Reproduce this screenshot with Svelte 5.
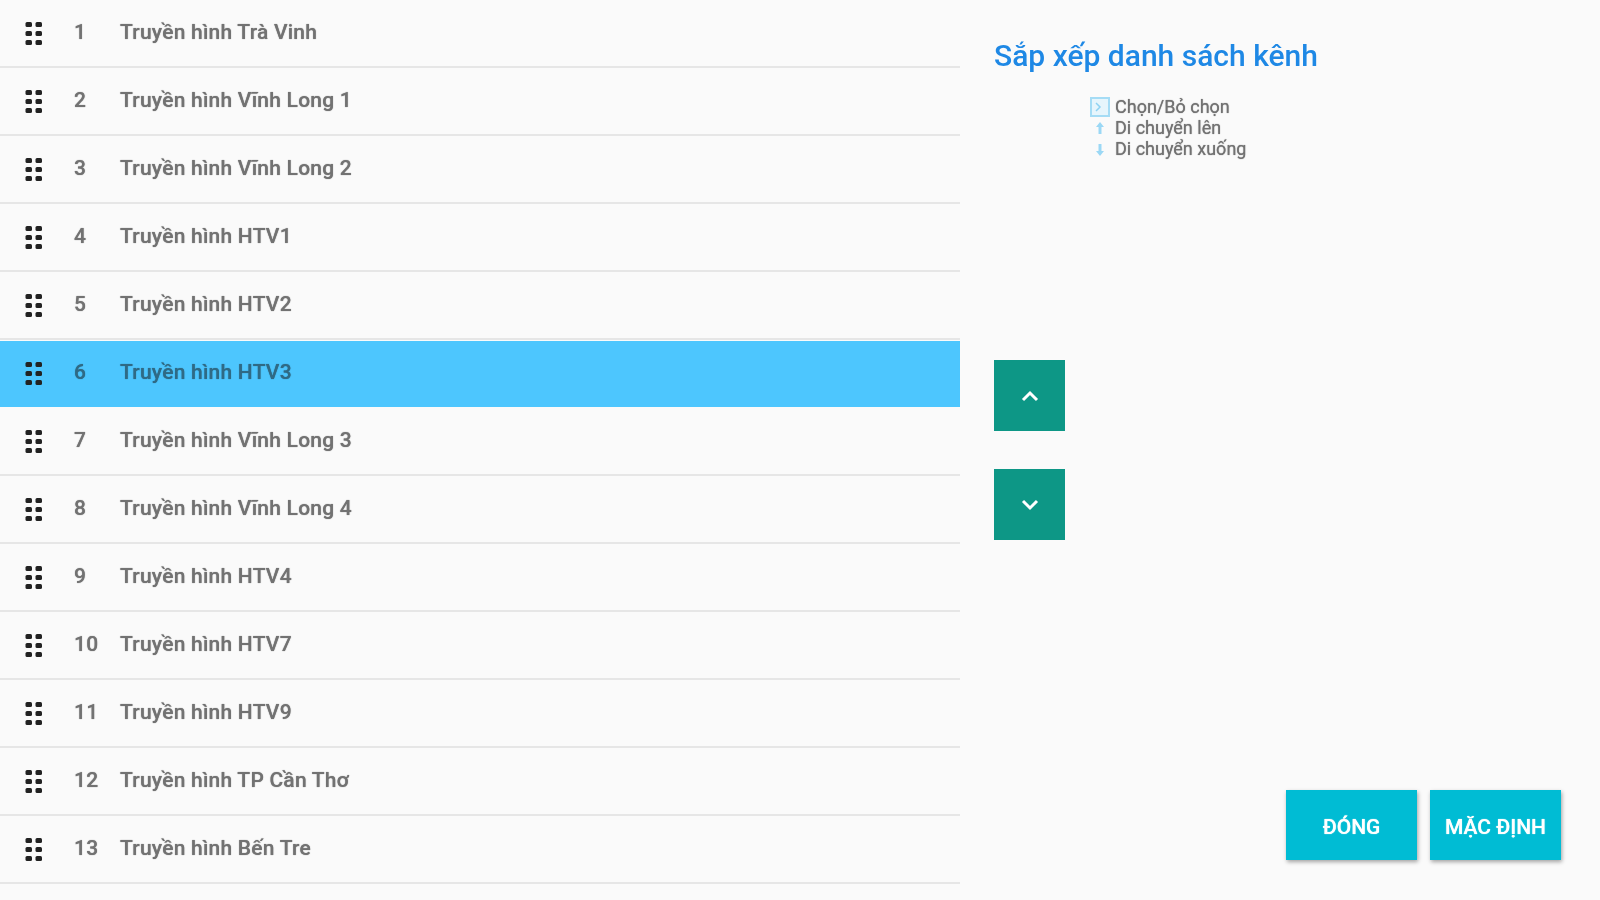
<script>
  const channels = [
    'Truyền hình Trà Vinh','Truyền hình Vĩnh Long 1','Truyền hình Vĩnh Long 2','Truyền hình HTV1','Truyền hình HTV2','Truyền hình HTV3','Truyền hình Vĩnh Long 3','Truyền hình Vĩnh Long 4','Truyền hình HTV4','Truyền hình HTV7','Truyền hình HTV9','Truyền hình TP Cần Thơ','Truyền hình Bến Tre'
  ];
  const selected = 5;
</script>

<div class="page">
  <ul class="list">
    {#each channels as name, i}
      <li class="row" class:selected={i === selected}>
        <svg class="grip" width="18" height="24" viewBox="0 0 18 24" aria-hidden="true">
          {#each [0, 9, 18] as y}
            <rect x="0.5" y={y} width="6.5" height="5" rx="1.5" />
            <rect x="10.5" y={y} width="6.5" height="5" rx="1.5" />
          {/each}
        </svg>
        <span class="num">{i + 1}</span>
        <span class="name">{name}</span>
      </li>
    {/each}
  </ul>

  <section class="side">
    <h1>Sắp xếp danh sách kênh</h1>
    <div class="legend">
      <div class="line">
        <svg width="20" height="20" viewBox="0 0 20 20" aria-hidden="true"><rect x="1" y="1" width="18" height="18" fill="#e6f5fc" stroke="#a5dcf5" stroke-width="2"/><path d="M6 6l4 4-4 4" fill="none" stroke="#8ed2f2" stroke-width="1.5"/></svg>
        <span>Chọn/Bỏ chọn</span>
      </div>
      <div class="line">
        <svg width="20" height="20" viewBox="0 0 20 20" aria-hidden="true"><path d="M10 4l4 5h-2.5v7h-3V9H6z" fill="#9bd8f5"/></svg>
        <span>Di chuyển lên</span>
      </div>
      <div class="line">
        <svg width="20" height="20" viewBox="0 0 20 20" aria-hidden="true"><path d="M10 17l4-5h-2.5V5h-3v7H6z" fill="#9bd8f5"/></svg>
        <span>Di chuyển xuống</span>
      </div>
    </div>

    <div class="arrows">
      <button class="arrow" aria-label="Di chuyển lên">
        <svg width="20" height="12" viewBox="0 0 20 12"><path d="M3 10l7-7 7 7" fill="none" stroke="#fff" stroke-width="3"/></svg>
      </button>
      <button class="arrow" aria-label="Di chuyển xuống">
        <svg width="20" height="12" viewBox="0 0 20 12"><path d="M3 2l7 7 7-7" fill="none" stroke="#fff" stroke-width="3"/></svg>
      </button>
    </div>

    <div class="actions">
      <button class="action">ĐÓNG</button>
      <button class="action">MẶC ĐỊNH</button>
    </div>
  </section>
</div>

<style>
  :global(body) {
    margin: 0;
    background: #fafafa;
  }
  .page {
    display: flex;
    width: 1600px;
    height: 900px;
    overflow: hidden;
    background: #fafafa;
    font-family: Roboto, "Noto Sans", sans-serif;
    filter: blur(0.6px);
  }
  .list {
    width: 960px;
    flex: none;
    margin: 0;
    padding: 0;
    list-style: none;
  }
  .row {
    display: flex;
    align-items: center;
    box-sizing: border-box;
    height: 68px;
    padding-bottom: 3px;
    border-bottom: 2px solid #e6e6e6;
    color: #727272;
    font-size: 21px;
    letter-spacing: 0.22px;
    font-weight: 500;
  }
  .row.selected {
    padding-bottom: 4px;
    background: #4dc6fe;
    background-clip: padding-box;
    border-top: 1px solid #fafafa;
    border-bottom: 1px solid #fafafa;
    color: #2f6a85;
  }
  .grip {
    flex: none;
    margin-left: 25px;
    position: relative;
    top: 2px;
    fill: #222;
  }
  .num,
  .name,
  .line span,
  .action {
    text-shadow: 0 0 1px currentColor;
  }
  .num {
    width: 46px;
    margin-left: 31px;
    flex: none;
  }
  .side {
    flex: 1;
    display: flex;
    flex-direction: column;
    padding: 0 39px 40px 34px;
  }
  h1 {
    margin: 37px 0 0;
    font-size: 30px;
    line-height: 38px;
    font-weight: 500;
    color: #1e88e5;
  }
  .legend {
    margin: 21px 0 0 96px;
    font-size: 18px;
    line-height: 21px;
    color: #727272;
  }
  .line {
    display: flex;
    align-items: center;
    gap: 5px;
  }
  .arrows {
    display: flex;
    flex-direction: column;
    gap: 38px;
    margin-top: 201px;
  }
  .arrow {
    width: 71px;
    height: 71px;
    padding: 0;
    border: 0;
    background: #0d9786;
    display: flex;
    align-items: center;
    justify-content: center;
  }
  .actions {
    margin-top: auto;
    display: flex;
    justify-content: flex-end;
    gap: 13px;
  }
  .action {
    width: 131px;
    height: 70px;
    padding: 3px 0 0;
    border: 0;
    background: #00bcd4;
    color: #fff;
    font-family: inherit;
    font-size: 21px;
    font-weight: 500;
    box-shadow: 1px 2px 4px rgba(0, 0, 0, 0.35);
  }
</style>
